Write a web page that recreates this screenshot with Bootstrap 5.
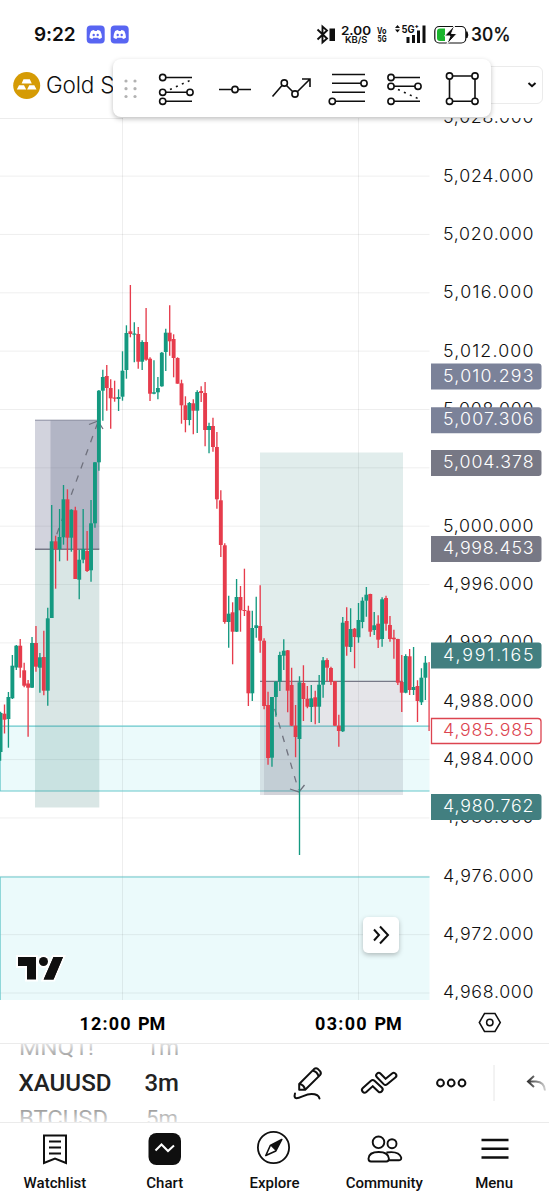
<!DOCTYPE html>
<html lang="en">
<head>
<meta charset="utf-8">
<meta name="viewport" content="width=device-width, initial-scale=1">
<title>Gold Spot chart</title>
<link href="https://cdn.jsdelivr.net/npm/bootstrap@5.3.0/dist/css/bootstrap.min.css" rel="stylesheet">
<style>
body{font-family:Inter,"Liberation Sans",sans-serif;color:#0f0f0f;background:#fff;overflow:hidden}
.screen{width:549px;height:1200px}
.statusbar{height:55px;padding:14px 37px 0 34px}
.clock{font-size:19px;font-weight:600;letter-spacing:-.1px;line-height:41px}
.headrow{height:63px;padding:11px 6px 14px 12px}
.symname{font-size:22.5px;font-weight:350;letter-spacing:-.2px;line-height:37px;padding-left:1px}
.currency{width:90px;height:38px;border:1px solid #ebebeb;border-radius:6px;padding-right:4px}
.drawbar{left:113px;top:59px;width:378px;height:58px;border-radius:8px;box-shadow:0 2px 5px rgba(0,0,0,.25)}
.plot{height:882px}
.timerow{height:44px;border-bottom:1.5px solid #ebebeb}
.picker{height:79px;border-bottom:1.5px solid #ebebeb}
.tab{width:110px;height:77px;font:500 15px Roboto,sans-serif;padding-top:5px}
.tab svg{height:40px}
.tab span{padding-top:6px}
.goto{left:363px;top:799px;width:36px;height:36px;border-radius:5px;box-shadow:0 2px 5px rgba(0,0,0,.25)}
.ln{fill:none;stroke:#0f0f0f}
</style>
</head>
<body>
<main class="screen d-flex flex-column position-relative overflow-hidden">
  <header class="statusbar d-flex">
    <div class="clock">9:22</div>
    <svg width="50" height="40" class="ms-2" viewBox="84.300 13.500 50 40">
      <g id="chat"><rect x="87" y="25" width="18" height="18" rx="4" fill="#5865f2"/>
      <path d="M91.400 30.500q2-.9 3-.9l.5.8h2.200l.5-.8q1.400 0 3 .9 1.800 3.500 1.700 6.600-1.400 1.100-3 1.400l-.8-1.300h-5l-.8 1.300q-1.600-.3-3-1.400 0-3.300 1.700-6.600z" fill="#fff"/><circle cx="94" cy="34.500" r="1.200" fill="#5865f2"/><circle cx="98" cy="34.500" r="1.200" fill="#5865f2"/></g>
      <use href="#chat" x="24"/>
    </svg>
    <svg class="ms-auto" width="197" height="40" viewBox="315 14 197 40" fill="#0f0f0f">
      <path class="ln" stroke-width="1.900" d="M317.500 29.500l9.500 9-4.500 4v-16l4.500 4-9.500 9"/>
      <rect x="329.500" y="28.500" width="5.500" height="12.500"/>
      <text x="341" y="35" font-size="12.300" font-weight="600" textLength="30" lengthAdjust="spacingAndGlyphs">2.00</text>
      <text x="345" y="43" font-size="8.500" font-weight="600" textLength="22.500" lengthAdjust="spacingAndGlyphs">KB/S</text>
      <text x="377" y="33.500" font-size="9" font-weight="700" textLength="9.500" lengthAdjust="spacingAndGlyphs">Vo</text>
      <text x="377.500" y="42.300" font-size="9.500" font-weight="700" textLength="9" lengthAdjust="spacingAndGlyphs">5G</text>
      <path d="M395 28l2.500-3 2.500 3zM395 29.500l2.500 3 2.500-3z"/>
      <text x="401.500" y="32.500" font-size="10" font-weight="700" textLength="17.500" lengthAdjust="spacingAndGlyphs">5G⁺</text>
      <path d="M406.500 37h3v6h-3zM412 35h3v8h-3zM417 30.500h3v12.500h-3zM422.500 25.500h3v17.500h-3z"/>
      <rect class="ln" x="434.800" y="26.500" width="31" height="16.500" rx="4.500" stroke-width="1.200"/>
      <path d="M440 28.500h5v12.500h-5q-3 0-3-3v-6.500q0-3 3-3z" fill="#1ab52d"/>
      <path d="M455 25l-10.500 11h5.500l-3.500 9 10.500-11.500h-5.500z" stroke="#fff" stroke-width="1"/>
      <path d="M466 31.500h1.500q1.500 3.200 0 6.500H466z"/>
      <text x="471" y="41.300" font-size="18.500" font-weight="500" stroke="#0f0f0f" stroke-width=".2" textLength="39.500" lengthAdjust="spacingAndGlyphs">30%</text>
    </svg>
  </header>

  <section class="headrow d-flex">
    <svg width="29" height="38" viewBox="12 66 29 38">
      <circle cx="26.700" cy="85.500" r="13.500" fill="#d59b05"/>
      <path d="M23.500 79.300h6.300l2 4.200H21.600zM19 85.300h5l2.200 4.200h-9.400zM29.300 85.300h5l2.200 4.200h-9.400z" fill="#fff"/>
    </svg>
    <div class="ms-1"><div class="symname">Gold Spot</div></div>
    <div class="currency ms-auto d-flex align-items-center justify-content-end">
      <svg width="12" height="10" viewBox="0 0 12 10"><path class="ln" stroke-width="2" d="M2.500 3l3.500 3.200L9.500 3"/></svg>
    </div>
  </section>

  <section class="plot position-relative">
    <svg id="chart" class="d-block" width="549" height="882" viewBox="0 118 549 882" font-family="Inter,sans-serif" font-weight="350" font-size="17.800"></svg>
    <button class="goto position-absolute btn bg-white border-0 p-0 d-flex" aria-label="Latest bar">
      <svg width="36" height="36" viewBox="0 0 36 36"><path class="ln" stroke-width="2" d="M11 12.500l5 5.500-5 5.500M17 9.500l8 8.500-8 8.500"/></svg>
    </button>
  </section>

  <section class="timerow">
    <svg class="d-block" width="549" height="42" viewBox="0 1000 549 42">
      <g font-family="Roboto,sans-serif" font-size="18" font-weight="700">
        <text x="79.500" y="1029.700" letter-spacing="1.200">12:00<tspan x="138" letter-spacing="0">PM</tspan></text>
        <text x="315" y="1029.700" letter-spacing="1.300">03:00<tspan x="374.500" letter-spacing="0">PM</tspan></text>
      </g>
      <path class="ln" stroke-width="1.500" d="M484.500 1013.500h10.500l5.300 9-5.300 9h-10.500l-5.200-9z"/>
      <circle class="ln" stroke-width="1.500" cx="489.800" cy="1022.500" r="3.200"/>
    </svg>
  </section>

  <section class="picker d-flex overflow-hidden">
    <svg class="d-block" width="549" height="78" viewBox="0 1044 549 78" font-family="Roboto,sans-serif">
      <defs>
        <linearGradient id="up" x1="0" y1="1045" x2="0" y2="1058" gradientUnits="userSpaceOnUse"><stop stop-color="#ddd"/><stop offset="1" stop-color="#999"/></linearGradient>
        <linearGradient id="dn" x1="0" y1="1109" x2="0" y2="1122" gradientUnits="userSpaceOnUse"><stop stop-color="#999"/><stop offset="1" stop-color="#ddd"/></linearGradient>
        <linearGradient id="fade" x1="526" y1="0" x2="547" y2="0" gradientUnits="userSpaceOnUse"><stop stop-color="#222"/><stop offset="1" stop-color="#ddd"/></linearGradient>
      </defs>
      <g fill="url(#up)" font-size="22"><text x="19" y="1055" textLength="75" lengthAdjust="spacingAndGlyphs">MNQ1!</text><text x="146" y="1055" textLength="33" lengthAdjust="spacingAndGlyphs">1m</text></g>
      <g fill="#222" font-size="23.500" font-weight="500"><text x="18.500" y="1091" textLength="93" lengthAdjust="spacingAndGlyphs">XAUUSD</text><text x="144.500" y="1091" textLength="34.500" lengthAdjust="spacingAndGlyphs">3m</text></g>
      <g fill="url(#dn)" font-size="22"><text x="19" y="1126" textLength="89" lengthAdjust="spacingAndGlyphs">BTCUSD</text><text x="146" y="1126" textLength="32" lengthAdjust="spacingAndGlyphs">5m</text></g>
      <g class="ln" stroke-width="2" stroke-linejoin="round" stroke-linecap="round">
        <path d="M299.200 1084l14.800-14.900q2-1.700 4 0l2 2q1.700 2 0 4l-14.800 14.700h-6zM299.500 1084q4.500.7 5.500 5.500M312.500 1070.500q4.800 1.200 6.200 6"/>
        <path d="M295 1093.500q-1.300 4.500 1.500 4.700c4 0 9-4.200 15-4.200q7 0 8 4.500"/>
        <path d="M364.600 1090l8.100-7.300 7.300 6.800" stroke-width="7.200"/><path d="M364.600 1090l8.100-7.300 7.300 6.800" stroke-width="3.200" style="stroke:#fff"/>
        <path d="M378.800 1075.500l6.700 6.800 8.200-6.800" stroke-width="7.200"/><path d="M378.800 1075.500l6.700 6.800 8.200-6.800" stroke-width="3.200" style="stroke:#fff"/>
        <circle cx="440.500" cy="1083" r="3.400"/><circle cx="451.200" cy="1083" r="3.400"/><circle cx="462" cy="1083" r="3.400"/>
      </g>
      <path d="M494 1065v36" stroke="#e6e6e6"/>
      <path d="M534 1076l-6 5.500 6 5.500M528 1081.500h8q8.500.5 9 9" fill="none" stroke="url(#fade)" stroke-width="2"/>
    </svg>
  </section>

  <nav class="d-flex">
    <div class="tab d-flex flex-column align-items-center">
      <svg width="40" viewBox="0 0 40 40"><path class="ln" stroke-width="2" d="M9 7.500h22v27.500l-11-4.500-11 4.500zM14 13.500h12M14 19.500h12M14 25.500h12"/></svg>
      <span>Watchlist</span></div>
    <div class="tab d-flex flex-column align-items-center">
      <svg width="40" viewBox="0 0 40 40"><rect x="3.500" y="5" width="32.500" height="32" rx="8" fill="#0f0f0f"/><path d="M10.500 22.500l6-6 6.500 6.500 6-5.500" fill="none" stroke="#fff" stroke-width="2"/></svg>
      <span>Chart</span></div>
    <div class="tab d-flex flex-column align-items-center">
      <svg width="40" viewBox="-.800 0 40 40"><circle class="ln" cx="18.700" cy="19.500" r="15.600" stroke-width="1.800"/><path class="ln" stroke-width="1.600" stroke-linejoin="round" d="M27 11.500l-11.500 6L11 27.500l10-4.500z"/><path d="M27 11.500l-11.500 6L21 23z" fill="#0f0f0f"/></svg>
      <span>Explore</span></div>
    <div class="tab d-flex flex-column align-items-center">
      <svg width="40" viewBox="-.500 0 40 40"><g class="ln" stroke-width="1.900"><circle cx="14" cy="14.300" r="5.800"/><circle cx="27.500" cy="15.700" r="4.500"/><path d="M4 30.500c.3-4.500 4-6.500 10.200-6.500s9.700 2 10.200 6.500q0 3-2.500 3H6.500q-2.500 0-2.500-3zM22 24.500q12.500-1.800 14.700 5 .3 2.700-2 2.700H24.500"/></g></svg>
      <span>Community</span></div>
    <div class="tab d-flex flex-column align-items-center">
      <svg width="40" viewBox="0 0 40 40"><path class="ln" stroke-width="2.500" d="M7.500 12h27M7.500 20.800h27M7.500 29.600h27"/></svg>
      <span>Menu</span></div>
  </nav>

  <div class="drawbar position-absolute bg-white">
    <svg class="d-block" width="378" height="58" viewBox="113 59 378 58">
      <g fill="#b2b2b2"><circle cx="126" cy="81" r="1.600"/><circle cx="135" cy="81" r="1.600"/><circle cx="126" cy="88.700" r="1.600"/><circle cx="135" cy="88.700" r="1.600"/><circle cx="126" cy="96.500" r="1.600"/><circle cx="135" cy="96.500" r="1.600"/></g>
      <g class="ln" stroke-width="1.600">
        <circle cx="162.700" cy="77.500" r="3.100"/><circle cx="162.700" cy="92.300" r="3.100"/><circle cx="190" cy="92.300" r="3.100"/><circle cx="162.700" cy="101.300" r="3.100"/>
        <path d="M166 77.500h26M166 92.300h21M166 101.300h26"/><path d="M170 89.500l21-9.500" stroke-dasharray="2 4.500"/>
        <circle cx="235" cy="89.500" r="3.100"/><path d="M219 89.500h13M238 89.500h13"/>
        <circle cx="284.300" cy="83" r="3.100"/><circle cx="295" cy="94" r="3.100"/><path d="M272.500 96.500l9.700-11.200M286.500 85.500l6.300 6.300M297.300 91.700l12.500-12.500M302 79h8v8"/>
        <circle cx="364" cy="83.300" r="3.100"/><circle cx="332.300" cy="101.300" r="3.100"/><path d="M332 74.500h33M332 83.300h29M332 92.300h33M335.500 101.300h29.500"/>
        <circle cx="391" cy="77.500" r="3.100"/><circle cx="391" cy="86.300" r="3.100"/><circle cx="418" cy="86.300" r="3.100"/><circle cx="391" cy="101.300" r="3.100"/>
        <path d="M394 77.500h26M394 86.300h21M394 101.300h26"/><path d="M398 89.500l21 9.500" stroke-dasharray="2 4.500"/>
        <circle cx="449.500" cy="76" r="3.100"/><circle cx="475" cy="76" r="3.100"/><circle cx="449.500" cy="101.300" r="3.100"/><circle cx="475" cy="101.300" r="3.100"/>
        <path d="M452.600 76h19.300M452.600 101.300h19.300M449.500 79v19M475 79v19"/>
      </g>
    </svg>
  </div>
</main>
<script>
// Each bar: high, body top, body bottom, low, direction (1 up, 0 down)
const bars = [
[711.7,713,752,760.7,1],[704.5,713.7,719.7,733.5,0],[692,697,719,747.7,1],[655,665.7,698.3,699,1],[645,645.7,667.5,670,1],
[639,645.7,667.7,677.7,0],[662.7,670.3,685.7,687.3,0],[680,683.5,687.7,736.7,0],[637,643,687.7,688,1],[626,643,666.7,671.7,0],
[653,657.3,667.7,692.7,1],[630.7,657,690.7,695.3,0],[607.7,618.3,690.7,705.7,1],[505,541.3,618,618,1],[535.7,541.3,549,588.7,0],
[509,537,549,561.3,1],[485,499.3,537.3,544.7,1],[489.3,499.3,537.7,560.7,0],[509.3,509.7,537.7,551.7,1],[506.7,510.3,579,579,0],
[550,559.7,579.7,599.3,1],[509,549,559.7,563.3,1],[531,551,571,572,0],[500,523.3,570.3,581.7,1],[462,462.3,523.3,527.7,1],
[390,390.7,462.3,470.7,1],[369.7,377,390.7,420.7,1],[365,376,388,410.7,0],[379.3,388,398.3,428.7,0],[380.7,397.5,398.7,401.7,0],
[389.3,397,399,411,1],[351.3,370.7,396.7,400.7,1],[325.3,333,370,378.7,1],[285,331.3,334,337.3,0],[322.3,333.5,334.7,362.3,1],
[327,334,361.7,368.7,0],[340.3,342,361.7,370,1],[308,342,359.7,360.7,0],[357.3,358.7,393.7,401,0],[360.3,392.3,393.7,394.3,1],
[377,388,392.3,399.3,1],[352,352.7,386.3,386.7,1],[328.7,332.7,352,371,1],[305.3,332.7,341.3,355.7,0],[334.3,339,358,377.3,0],
[357.3,358,383.7,383.7,0],[379.7,383.3,405.3,423.7,0],[396.3,405.3,420,432.3,0],[402,403,420,425.3,1],[399.3,403.3,410.7,434.3,0],
[390.3,392,410.7,433,1],[386.3,391,393,402,0],[382,393,430,446.3,0],[422.7,426,430,453.3,1],[417.7,426,447,451.7,0],
[432,447,499.3,508.7,0],[490.3,500.3,545,557,0],[543.3,545.3,622,623.7,0],[595.7,613.7,622,647.7,1],[602.3,612.3,631.7,664.3,0],
[579,597,631.7,632,1],[586,597,610.3,631.7,0],[568.7,610,611,616,0],[605.7,610.7,693.3,706,0],[610.7,628,693.3,701,1],
[596.7,625.3,628,637.7,1],[585.3,626,640.7,652.7,0],[638.3,640.7,706,709.3,0],[691.7,705,758,764.7,0],[697,697,757.7,766.7,1],
[681,681.7,697,716.7,1],[651.7,655,681.7,691,1],[639.3,650.7,655.7,670,1],[650,650.3,690.7,712.3,0],[667.7,685,725.7,726,0],
[705,725.7,737,757.3,0],[676.3,682.3,739,855,1],[665.3,683,699,721,0],[686,698.7,706.7,708.3,0],[685,698.3,707,722,1],
[690.7,697.3,706.7,724.3,0],[675,684.7,706.7,723,1],[657,660.3,684.7,697.7,1],[658.3,660,667.7,681.3,0],[666.7,668,681.7,685,0],
[681,681.3,725.7,726,0],[714.7,725.7,731,746.7,0],[617,622.7,731.3,732,1],[607.3,621,646.7,655.7,0],[608.3,629,647,652,1],
[628,628.7,637,668.3,0],[603,620,637.3,642.7,1],[597.3,600.7,622,628.3,1],[587,594.7,600.7,616.7,1],[593.7,594,631.7,636.7,0],
[612,625.3,630,635,1],[615.3,623.7,639.7,648,0],[597.3,599.3,639,646.7,1],[595.7,598,623.7,630.7,0],[616,625,639,641.7,0],
[629.7,637.7,639.3,658.7,0],[638.7,639,682.7,685,0],[655,682,692.7,712,0],[654.3,656,692.7,693.3,1],[649,656.3,690,695,0],
[647,687,690,695,1],[680.3,686,701,722,0],[668.3,677.7,702.3,705,1],[656,662.7,677.7,700,1],[662,662.3,731,731,0]];
const step = 236 / 60, firstX = 122.5 - 31 * step;
const label = (y, t, c) => `<text x="443" y="${y + 6.3}" fill="${c}" textLength="90.5">${t}</text>`;
const tag = (y, t, c) => `<path d="M431 ${y - 13}h107.500q3 0 3 3v20q0 3-3 3H431z" fill="${c}"/>` + label(y - 1.3, t, '#fff');
let s = '<clipPath id="area"><rect x="0" y="118" width="429.500" height="882"/></clipPath><path d="M0 118.500h123" stroke="#ececec"/><g clip-path="url(#area)">';
// zones
s += '<rect x="0" y="726" width="430" height="65" fill="#ebfafb"/><rect x="0" y="877" width="430" height="123" fill="#ebfafb"/>';
// grid
for (let i = 0; i < 15; i++) s += `<path d="M0 ${176.1 + i * 58.35}H430" stroke="#000" stroke-opacity=".065"/>`;
s += '<path d="M122.500 118V1000M358.500 118V1000" stroke="#000" stroke-opacity=".065"/>';
s += '<path d="M0 726.200H430M0 791H430M0 877H430" stroke="#68c7cb" stroke-width="1.200"/><path d="M.5 726V791M.5 877V1000" stroke="#68c7cb" stroke-opacity=".7"/>';
// long and short positions
s += '<rect x="35" y="420" width="64.300" height="129" fill="#5d6284" fill-opacity=".28"/><rect x="50.500" y="420" width="48.800" height="129" fill="#5d6284" fill-opacity=".27"/>';
s += '<rect x="35" y="549" width="64.300" height="258.500" fill="#3f837b" fill-opacity=".2"/><path d="M35 420.200h64.300" stroke="#8e92a3"/><path d="M35 549.200h64.300" stroke="#777987" stroke-width="1.400"/>';
s += '<rect x="260" y="452.500" width="143" height="229" fill="#3f8f83" fill-opacity=".155"/><rect x="260" y="681.500" width="143" height="113.500" fill="#62657a" fill-opacity=".17"/><rect x="264" y="681.500" width="35.500" height="113.500" fill="#62657a" fill-opacity=".15"/>';
s += '<path d="M260 681.300h143" stroke="#777987" stroke-width="1.200"/>';
s += '<g fill="none" stroke="#6f717d" stroke-width="1.300"><path d="M98 422L55 539" stroke-dasharray="6.500 7.500" stroke-dashoffset="-1"/><path d="M298.500 790L272 700" stroke-dasharray="6.500 7.500" stroke-dashoffset="-8"/><path d="M89 424.500l9-3.500 5 8M290 789l9 3 5.500-7"/></g>';
const pos = x => firstX + x * step;
bars.forEach(([h, t, b, l, up], i) => {
  const c = up ? '#149980' : '#e63c4c', x = pos(i), w = i === bars.length - 1 ? 1.2 : 3.9;
  s += `<path d="M${x.toFixed(2)} ${h}V${l}" stroke="${c}" stroke-width="1.350"/><rect x="${(x - w / 2).toFixed(2)}" y="${t}" width="${w}" height="${Math.max(1, b - t).toFixed(1)}" fill="${c}"/>`;
});
s += '</g>';
// price scale; the 5,004 step lies wholly under a tag
for (let i = -1; i < 15; i++) if (i !== 5) s += label(175.4 + i * 58.33, (5024 - i * 4).toLocaleString('en-US') + '.000', '#0f0f0f');
s += tag(376.5, '5,010.293', '#7b8299') + tag(420.2, '5,007.306', '#7b8299') + tag(463, '5,004.378', '#777885') + tag(549, '4,998.453', '#777885') + tag(655.5, '4,991.165', '#427f80') + tag(807, '4,980.762', '#427f80');
s += '<path d="M431.500 718.500h106.500q3 0 3 3v19q0 3-3 3h-106.500z" fill="#fff" stroke="#dc4450" stroke-width="1.300"/>' + label(729.5, '4,985.985', '#dc4450');
// TradingView mark
s += '<g fill="#0f0f0f" stroke="#fff" stroke-width="4" paint-order="stroke"><path d="M18 957h18v22.500h-9v-13.500h-9zM53.500 957H63l-9.500 22.500H43.700z"/><circle cx="43.500" cy="961.500" r="4.500"/></g><path d="M53.500 957H63l-9.500 22.500H43.700z" fill="#0f0f0f"/>';
document.getElementById('chart').innerHTML = s;
</script>
<script src="https://cdn.jsdelivr.net/npm/bootstrap@5.3.0/dist/js/bootstrap.bundle.min.js"></script>
</body>
</html>
